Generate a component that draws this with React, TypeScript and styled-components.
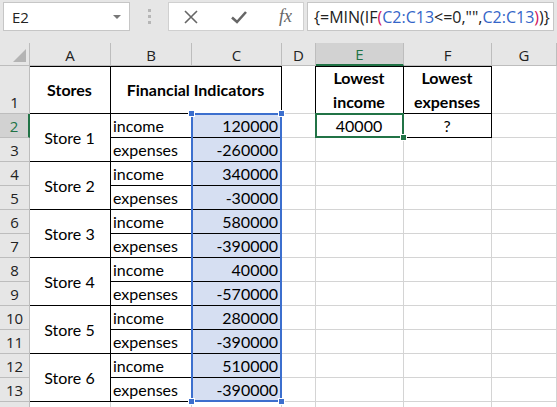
import React from "react";
import styled, { createGlobalStyle } from "styled-components";

const GlobalStyle = createGlobalStyle`
  html, body {
    margin: 0;
    padding: 0;
    background: #ffffff;
    overflow: hidden;
  }
  * {
    box-sizing: border-box;
  }
`;

const GREEN = "#217346";
const BLUE = "#3c6fce";
const GRID = "#d4d4d4";
const HEAD_LINE = "#bdbdbd";

const Window = styled.div`
  width: 557px;
  height: 407px;
  background: #e6e6e6;
  font-family: "Open Sans", "Noto Sans", sans-serif;
  overflow: hidden;
`;

const Toolbar = styled.div`
  display: flex;
  align-items: stretch;
  height: 43px;
  padding: 2px 3px 12px 3px;
`;

const NameBox = styled.div`
  width: 127px;
  display: flex;
  align-items: center;
  justify-content: space-between;
  padding: 0 8px 0 8px;
  background: #fff;
  border: 1px solid #c6c6c6;
  font-size: 15px;
  color: #222;
`;

const DropArrow = styled.span`
  width: 0;
  height: 0;
  border-left: 4px solid transparent;
  border-right: 4px solid transparent;
  border-top: 4px solid #777;
`;

const Grip = styled.div`
  width: 38px;
  display: flex;
  flex-direction: column;
  align-items: center;
  justify-content: center;
  gap: 3px;
  span {
    width: 3px;
    height: 3px;
    background: #b6b6b6;
  }
`;

const FxPanel = styled.div`
  width: 136px;
  display: flex;
  align-items: center;
  justify-content: space-between;
  padding: 0 11px 0 14px;
  background: #fff;
  border: 1px solid #d0d0d0;
`;

const FxLabel = styled.span`
  font-family: "Liberation Serif", "DejaVu Serif", serif;
  font-style: italic;
  font-size: 18px;
  color: #666;
`;

const FormulaInput = styled.div`
  flex: 1;
  margin-left: 3px;
  display: flex;
  align-items: center;
  padding-left: 6px;
  background: #fff;
  border: 1px solid #c6c6c6;
  font-size: 16px;
  color: #222;
  white-space: nowrap;
  overflow: hidden;
`;

const Ref = styled.span<{ $color: string }>`
  color: ${(p) => p.$color};
`;

const Sheet = styled.div`
  display: grid;
  grid-template-columns: 30px 81px 81px 90px 34px 88px 88px 1fr;
  grid-template-rows: 23px 48px repeat(12, 24px) 30px;
  background: #fff;
  font-family: "Lato", "Liberation Sans", sans-serif;
  font-size: 16px;
  color: #000;
`;

const Corner = styled.div`
  position: relative;
  background: #e6e6e6;
  border-right: 1px solid ${HEAD_LINE};
  border-bottom: 1px solid ${HEAD_LINE};
  &::after {
    content: "";
    position: absolute;
    right: 3px;
    bottom: 3px;
    width: 0;
    height: 0;
    border-left: 13px solid transparent;
    border-bottom: 13px solid #b4b4b4;
  }
`;

const ColHead = styled.div<{ $active?: boolean }>`
  display: flex;
  align-items: center;
  justify-content: center;
  background: ${(p) => (p.$active ? "#d2d2d2" : "#e6e6e6")};
  color: ${(p) => (p.$active ? GREEN : "#222")};
  border-right: 1px solid ${HEAD_LINE};
  border-bottom: ${(p) => (p.$active ? `2px solid ${GREEN}` : `1px solid ${HEAD_LINE}`)};
  font-family: "Open Sans", "Noto Sans", sans-serif;
  font-size: 15px;
  padding-top: 1px;
`;

const RowHead = styled.div<{ $active?: boolean }>`
  display: flex;
  align-items: flex-end;
  justify-content: center;
  padding-bottom: 1px;
  background: ${(p) => (p.$active ? "#d2d2d2" : "#e6e6e6")};
  color: ${(p) => (p.$active ? GREEN : "#222")};
  border-right: ${(p) => (p.$active ? `2px solid ${GREEN}` : `1px solid ${HEAD_LINE}`)};
  border-bottom: 1px solid ${HEAD_LINE};
  font-family: "Open Sans", "Noto Sans", sans-serif;
  font-size: 15px;
`;

type Edge = "grid" | "black";

const Cell = styled.div<{
  $align?: "left" | "center" | "right";
  $bold?: boolean;
  $right?: Edge;
  $bottom?: Edge;
  $top?: boolean;
  $fill?: string;
}>`
  display: flex;
  align-items: center;
  justify-content: ${(p) =>
    p.$align === "right" ? "flex-end" : p.$align === "center" ? "center" : "flex-start"};
  text-align: center;
  padding: 0 3px 0 2px;
  white-space: nowrap;
  line-height: 24px;
  font-weight: ${(p) => (p.$bold ? 700 : 400)};
  background: ${(p) => p.$fill ?? "#fff"};
  border-right: 1px solid ${(p) => (p.$right === "black" ? "#000" : GRID)};
  border-bottom: 1px solid ${(p) => (p.$bottom === "black" ? "#000" : GRID)};
  box-shadow: ${(p) => (p.$top ? "inset 0 1px 0 #000" : "none")};
`;

const Selection = styled.div`
  position: relative;
  grid-column: 4 / 5;
  grid-row: 3 / 15;
  margin: -1px 0 0 -1px;
  border: 2px solid ${BLUE};
  pointer-events: none;
  z-index: 2;
`;

const Handle = styled.span<{ $x: "left" | "right"; $y: "top" | "bottom"; $color: string }>`
  position: absolute;
  ${(p) => p.$x}: -5px;
  ${(p) => p.$y}: -5px;
  width: 7px;
  height: 7px;
  background: ${(p) => p.$color};
  border: 1px solid #fff;
`;

const ActiveCell = styled.div`
  position: relative;
  grid-column: 6 / 7;
  grid-row: 3 / 4;
  margin: -1px 0 0 -1px;
  border: 2px solid ${GREEN};
  pointer-events: none;
  z-index: 2;
`;

const SEL_FILL = "#d6dff2";

const stores: [number, number][] = [
  [120000, -260000],
  [340000, -30000],
  [580000, -390000],
  [40000, -570000],
  [280000, -390000],
  [510000, -390000],
];

const columns = ["A", "B", "C", "D", "E", "F", "G"];

export default function App() {
  return (
    <Window>
      <GlobalStyle />
      <Toolbar>
        <NameBox>
          E2
          <DropArrow />
        </NameBox>
        <Grip>
          <span />
          <span />
          <span />
        </Grip>
        <FxPanel>
          <svg width="16" height="16" viewBox="0 0 16 16">
            <path d="M2 2 L14 14 M14 2 L2 14" stroke="#666" strokeWidth="1.6" fill="none" />
          </svg>
          <svg width="18" height="16" viewBox="0 0 18 16">
            <path d="M2 8.5 L7 13 L16 3" stroke="#666" strokeWidth="2.6" fill="none" />
          </svg>
          <FxLabel>fx</FxLabel>
        </FxPanel>
        <FormulaInput>
          {"{=MIN(IF"}
          <Ref $color="#d0105c">(</Ref>
          <Ref $color="#3465c8">C2:C13</Ref>
          {'<=0,"",'}
          <Ref $color="#3465c8">C2:C13</Ref>
          <Ref $color="#d0105c">)</Ref>
          {")}"}
        </FormulaInput>
      </Toolbar>

      <Sheet>
        <Corner />
        {columns.map((c) => (
          <ColHead key={c} $active={c === "E"}>
            {c}
          </ColHead>
        ))}

        <RowHead>1</RowHead>
        <Cell $align="center" $bold $right="black" $bottom="black" $top>
          Stores
        </Cell>
        <Cell
          $align="center"
          $bold
          $right="black"
          $bottom="black"
          $top
          style={{ gridColumn: "3 / span 2" }}
        >
          Financial Indicators
        </Cell>
        <Cell $right="black" />
        <Cell $align="center" $bold $right="black" $bottom="black" $top>
          Lowest
          <br />
          income
        </Cell>
        <Cell $align="center" $bold $right="black" $bottom="black" $top>
          Lowest
          <br />
          expenses
        </Cell>
        <Cell />

        {stores.map(([income, expenses], i) => {
          const row = 2 + i * 2;
          return (
            <React.Fragment key={i}>
              <RowHead $active={row === 2} style={{ gridRow: row + 1 }}>
                {row}
              </RowHead>
              <Cell
                $align="center"
                $right="black"
                $bottom="black"
                style={{ gridRow: `${row + 1} / span 2`, gridColumn: 2 }}
              >
                Store {i + 1}
              </Cell>
              <Cell $right="black" $bottom="black" style={{ gridRow: row + 1, gridColumn: 3 }}>
                income
              </Cell>
              <Cell
                $align="right"
                $right="black"
                $bottom="black"
                $fill={SEL_FILL}
                style={{ gridRow: row + 1, gridColumn: 4 }}
              >
                {income}
              </Cell>
              <Cell $right={row === 2 ? "black" : "grid"} style={{ gridRow: row + 1, gridColumn: 5 }} />
              {row === 2 ? (
                <>
                  <Cell $align="center" $right="black" $bottom="black" style={{ gridRow: 3, gridColumn: 6 }}>
                    40000
                  </Cell>
                  <Cell $align="center" $right="black" $bottom="black" style={{ gridRow: 3, gridColumn: 7 }}>
                    ?
                  </Cell>
                </>
              ) : (
                <>
                  <Cell style={{ gridRow: row + 1, gridColumn: 6 }} />
                  <Cell style={{ gridRow: row + 1, gridColumn: 7 }} />
                </>
              )}
              <Cell style={{ gridRow: row + 1, gridColumn: 8 }} />

              <RowHead style={{ gridRow: row + 2 }}>{row + 1}</RowHead>
              <Cell $right="black" $bottom="black" style={{ gridRow: row + 2, gridColumn: 3 }}>
                expenses
              </Cell>
              <Cell
                $align="right"
                $right="black"
                $bottom="black"
                $fill={SEL_FILL}
                style={{ gridRow: row + 2, gridColumn: 4 }}
              >
                {expenses}
              </Cell>
              <Cell style={{ gridRow: row + 2, gridColumn: 5 }} />
              <Cell style={{ gridRow: row + 2, gridColumn: 6 }} />
              <Cell style={{ gridRow: row + 2, gridColumn: 7 }} />
              <Cell style={{ gridRow: row + 2, gridColumn: 8 }} />
            </React.Fragment>
          );
        })}

        <RowHead style={{ gridRow: 15 }}>14</RowHead>
        {columns.map((c) => (
          <Cell key={c} style={{ gridRow: 15 }} />
        ))}

        <Selection>
          <Handle $x="left" $y="top" $color={BLUE} />
          <Handle $x="right" $y="top" $color={BLUE} />
          <Handle $x="left" $y="bottom" $color={BLUE} />
          <Handle $x="right" $y="bottom" $color={BLUE} />
        </Selection>
        <ActiveCell>
          <Handle $x="right" $y="bottom" $color={GREEN} />
        </ActiveCell>
      </Sheet>
    </Window>
  );
}
